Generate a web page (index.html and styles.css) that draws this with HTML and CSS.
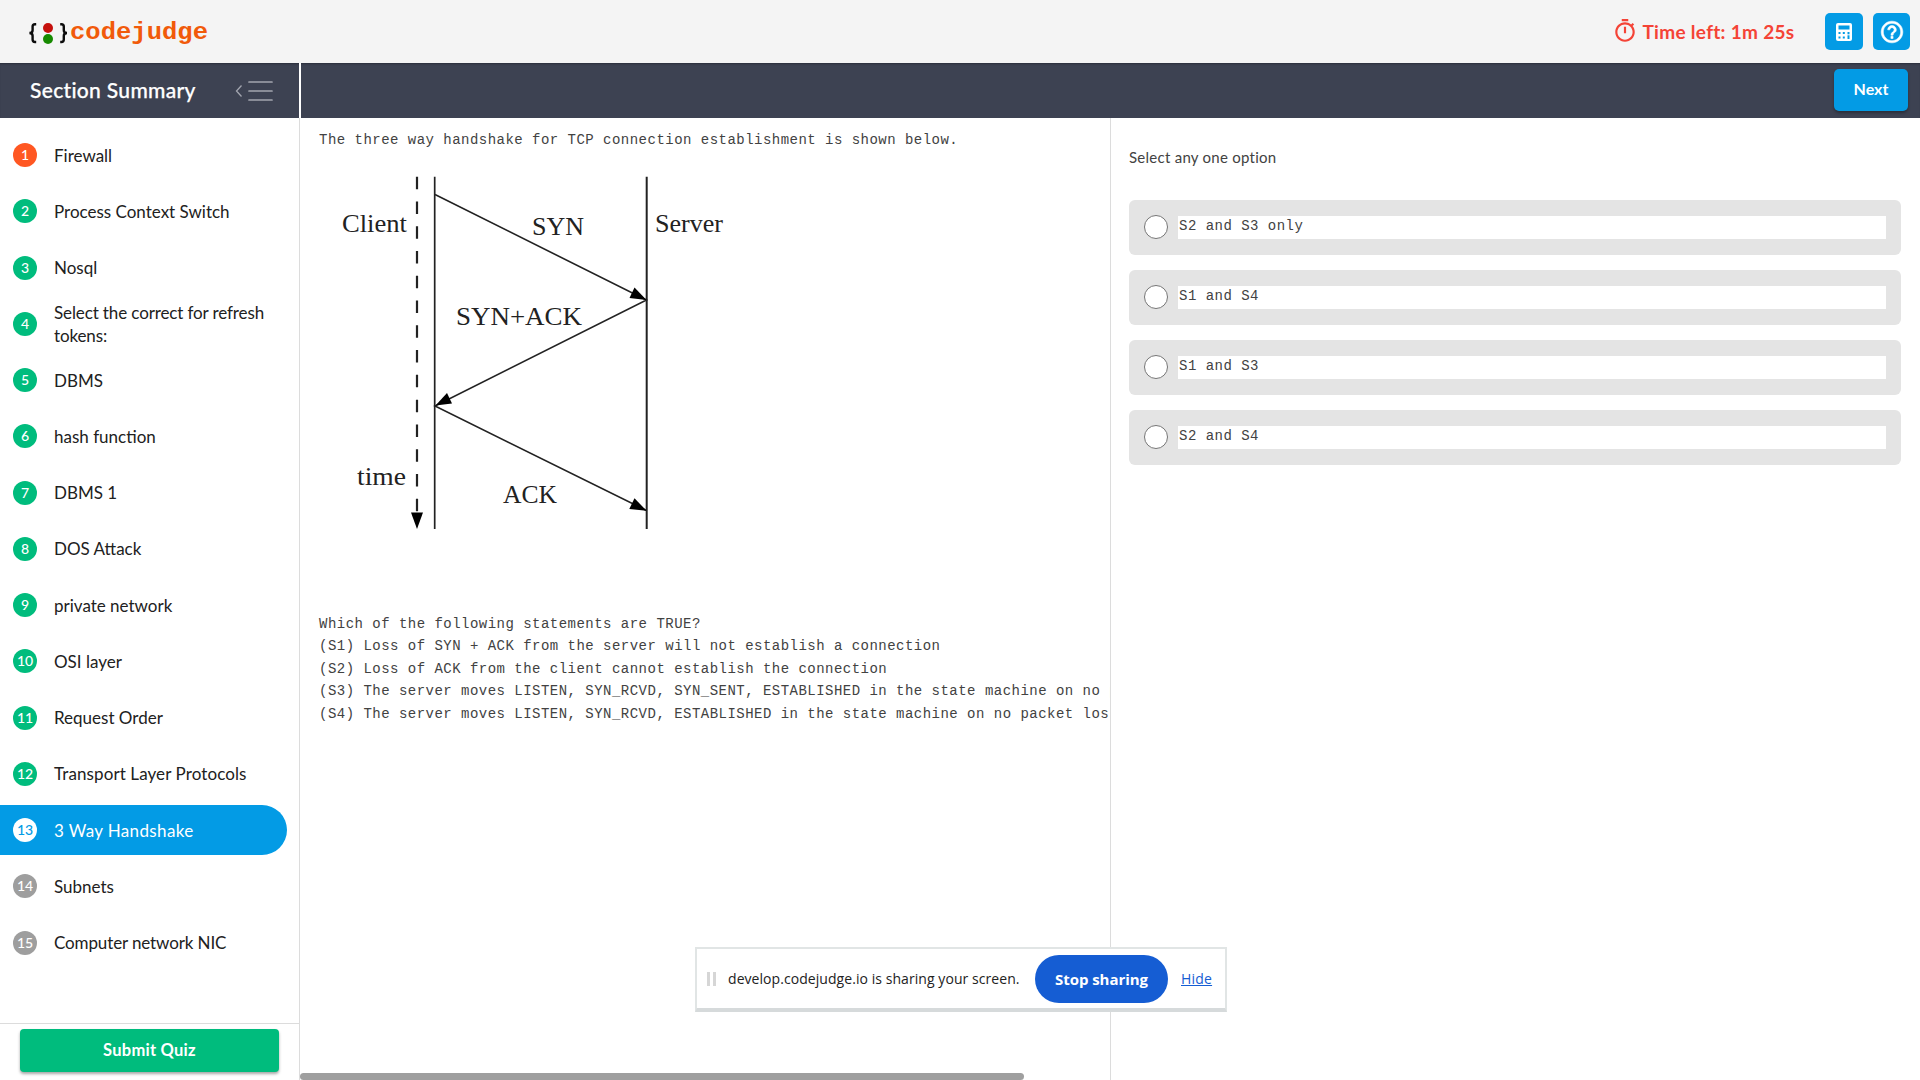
FILE: index.html
```html
<!DOCTYPE html>
<html lang="en">
<head>
<meta charset="utf-8">
<title>codejudge</title>
<link rel="stylesheet" href="styles.css">
</head>
<body>
<div class="app">
  <header class="topbar">
    <svg class="logo" width="182" height="30" viewBox="0 0 182 30" role="img" aria-label="codejudge">
      <g fill="none" stroke="#0c0c0c" stroke-width="2.4">
        <path d="M8.2 6.2H7Q4.6 6.2 4.6 8.6V12.2Q4.6 15 1.4 15Q4.6 15 4.6 17.800V21.600Q4.6 24 7 24H8.200"/>
        <path d="M32.200 6.200H33.400Q35.800 6.200 35.800 8.600V12.200Q35.800 15 39 15Q35.800 15 35.800 17.800V21.600Q35.800 24 33.400 24H32.200"/>
      </g>
      <circle cx="20" cy="10" r="5" fill="#c5100c"/>
      <circle cx="20" cy="21" r="5" fill="#178a00"/>
      <text x="42" y="21" class="logo-text" textLength="138" lengthAdjust="spacingAndGlyphs">codejudge</text>
    </svg>
    <div class="tools">
      <svg width="26" height="26" viewBox="0 0 24 24" fill="#f44336"><path d="M15 1H9v2h6V1zm-4 13h2V8h-2v6zm8.030-6.610l1.420-1.420c-.43-.51-.9-.99-1.410-1.410l-1.420 1.420C16.070 4.740 14.120 4 12 4c-4.970 0-9 4.030-9 9s4.020 9 9 9 9-4.030 9-9c0-2.120-.74-4.070-1.970-5.610zM12 20c-3.870 0-7-3.130-7-7s3.130-7 7-7 7 3.130 7 7-3.130 7-7 7z"/></svg>
      <span class="timer">Time left: 1m 25s</span>
      <button class="tool calc" aria-label="Calculator">
        <svg width="18" height="20" viewBox="0 0 18 20"><rect x="1" y="1" width="16" height="18" rx="2" fill="#fff"/><path fill="#039be5" d="M3.500 3.500h11v4h-11zM3.500 10h2v2h-2zM7.800 10h2v2h-2zM12.500 10h2v7h-2zM3.500 14.500h2v2h-2zM7.800 14.500h2v2h-2z"/><path fill="#fff" d="M12 12.300h3v1h-3z"/></svg>
      </button>
      <button class="tool" aria-label="Help">
        <svg width="26" height="26" viewBox="0 0 24 24" fill="#fff" stroke="#fff" stroke-width=".5"><path d="M11 18h2v-2h-2v2zm1-16C6.480 2 2 6.480 2 12s4.480 10 10 10 10-4.480 10-10S17.520 2 12 2zm0 18c-4.410 0-8-3.590-8-8s3.590-8 8-8 8 3.590 8 8-3.590 8-8 8zm0-14c-2.210 0-4 1.790-4 4h2c0-1.100.9-2 2-2s2 .9 2 2c0 2-3 1.750-3 5h2c0-2.250 3-2.500 3-5 0-2.210-1.790-4-4-4z"/></svg>
      </button>
    </div>
  </header>

  <nav class="navbar">
    <div class="nav-title">
      <h1>Section Summary</h1>
      <svg width="38" height="22" viewBox="0 0 38 22" fill="none" stroke="#a2a5af"><path d="M6.500 5.500L1.500 11L6.500 16.500" stroke-width="1.300"/><path d="M14 2H37M14 11H37M14 20H37" stroke-width="1.700" stroke-linecap="round"/></svg>
    </div>
    <button class="next">Next</button>
  </nav>

  <div class="body">
    <aside class="sidebar">
      <ol class="questions">
        <li class="wrong"><b>1</b><span>Firewall</span></li>
        <li><b>2</b><span>Process Context Switch</span></li>
        <li><b>3</b><span>Nosql</span></li>
        <li class="tight"><b>4</b><span>Select the correct for refresh tokens:</span></li>
        <li><b>5</b><span>DBMS</span></li>
        <li><b>6</b><span>hash function</span></li>
        <li><b>7</b><span>DBMS 1</span></li>
        <li><b>8</b><span>DOS Attack</span></li>
        <li><b>9</b><span>private network</span></li>
        <li><b>10</b><span>OSI layer</span></li>
        <li><b>11</b><span>Request Order</span></li>
        <li class="loose"><b>12</b><span>Transport Layer Protocols</span></li>
        <li class="active"><b>13</b><span>3 Way Handshake</span></li>
        <li class="todo"><b>14</b><span>Subnets</span></li>
        <li class="todo tight"><b>15</b><span>Computer network NIC</span></li>
      </ol>
      <div class="submit-row"><button class="submit">Submit Quiz</button></div>
    </aside>

    <main class="question">
      <div class="question-scroll">
        <pre class="intro">The three way handshake for TCP connection establishment is shown below.</pre>
        <svg class="diagram" width="440" height="380" viewBox="320 160 440 380">
          <g fill="none" stroke="#222">
            <path d="M417 176.700V512" stroke-width="2.200" stroke-dasharray="12.500 12.270"/>
            <path d="M434.700 176.700V529" stroke-width="1.700"/>
            <path d="M646.700 176.700V529" stroke-width="2"/>
            <path d="M435 194.500L646.500 300L435 406L646.500 510.500" stroke-width="1.600"/>
          </g>
          <g fill="#000">
            <path d="M411 512.500H423L417 529Z"/>
            <path d="M646.500 300L634.500 287.500L629.500 298Z"/>
            <path d="M435.500 405.500L447 393L452 403.500Z"/>
            <path d="M646.500 510.700L634.500 498.200L629.300 509Z"/>
          </g>
          <g class="labels">
            <text x="342" y="231.500" textLength="65" lengthAdjust="spacingAndGlyphs">Client</text>
            <text x="532" y="235" textLength="52" lengthAdjust="spacingAndGlyphs">SYN</text>
            <text x="655" y="231.500" textLength="68" lengthAdjust="spacingAndGlyphs">Server</text>
            <text x="456" y="325" textLength="126" lengthAdjust="spacingAndGlyphs">SYN+ACK</text>
            <text x="357" y="485" textLength="49" lengthAdjust="spacingAndGlyphs">time</text>
            <text x="503" y="502.500" textLength="54" lengthAdjust="spacingAndGlyphs">ACK</text>
          </g>
        </svg>
        <pre class="statements">Which of the following statements are TRUE?
(S1) Loss of SYN + ACK from the server will not establish a connection
(S2) Loss of ACK from the client cannot establish the connection
(S3) The server moves LISTEN, SYN_RCVD, SYN_SENT, ESTABLISHED in the state machine on no packet loss
(S4) The server moves LISTEN, SYN_RCVD, ESTABLISHED in the state machine on no packet loss</pre>
      </div>
      <div class="scroll-thumb"></div>
    </main>

    <section class="answers">
      <p>Select any one option</p>
      <label class="option"><i></i><code>S2 and S3 only</code></label>
      <label class="option"><i></i><code>S1 and S4</code></label>
      <label class="option"><i></i><code>S1 and S3</code></label>
      <label class="option"><i></i><code>S2 and S4</code></label>
    </section>
  </div>
</div>

<div class="share">
  <span class="grip"></span>
  <span class="share-text">develop.codejudge.io is sharing your screen.</span>
  <button class="stop">Stop sharing</button>
  <a class="hide">Hide</a>
</div>
</body>
</html>
```
FILE: styles.css
```css
* { box-sizing: border-box; }
body { margin: 0; background: #fff; color: #212121; font-family: Lato, sans-serif; overflow: hidden; }
button { border: 0; padding: 0 0 2px; font-family: inherit; color: #fff; display: flex; align-items: center; justify-content: center; }
p, h1, ol, pre { margin: 0; padding: 0; }

.app { height: 1080px; display: flex; flex-direction: column; }

.topbar { height: 63px; flex: none; background: #f4f4f4; display: flex; align-items: center; justify-content: space-between; padding: 0 10px 0 28px; }
.logo { margin-top: 2px; }
.logo-text { font: bold 23px "Liberation Mono", monospace; fill: #f15a0a; }
.tools { display: flex; align-items: center; }
.tools > svg { margin-bottom: 2px; }
.timer { margin: 0 31px 0 5px; padding-bottom: 1px; font-size: 19px; font-weight: 700; letter-spacing: .3px; color: #f44336; width: 151.500px; white-space: nowrap; }
.tool { width: 37px; height: 37px; padding: 0; border-radius: 5px; background: #039be5; }
.calc { width: 38px; margin-right: 10px; }

.navbar { height: 55px; flex: none; background: #3d4252; display: flex; justify-content: space-between; align-items: center; padding: 0 12px 2px 0; box-shadow: inset 0 2px 2px -1px #2b2f3c; }
.nav-title { width: 301px; height: 55px; margin-bottom: -2px; border-right: 2px solid #fff; padding: 0 26px 0 30px; display: flex; align-items: center; justify-content: space-between; color: #fff; }
.nav-title h1 { font-size: 21px; font-weight: 500; letter-spacing: .32px; padding-bottom: 3px; white-space: nowrap; -webkit-text-stroke: .25px #fff; }
.next { width: 74px; height: 42px; background: #039be5; border-radius: 5px; font-size: 16px; font-weight: 700; box-shadow: 0 2px 3px rgba(0, 0, 0, .3); }

.body { flex: 1; min-height: 0; display: flex; }
.sidebar { width: 300px; flex: none; border-right: 1px solid #dcdcdc; display: flex; flex-direction: column; justify-content: space-between; }
.questions { list-style: none; padding-top: 12px; display: flex; flex-direction: column; gap: 6.25px; }
.questions li { width: 287px; height: 50px; display: flex; align-items: center; padding: 0 20px 0 13px; font-size: 17px; line-height: 23px; border-radius: 0 25px 25px 0; }
.questions b { width: 24px; height: 24px; flex: none; margin-right: 17px; border-radius: 50%; background: #00bc7d; color: #fff; font-size: 14px; font-weight: 500; line-height: 24px; letter-spacing: 0; text-align: center; }
.questions .tight { letter-spacing: -.12px; }
.questions .loose { letter-spacing: .1px; }
.questions .wrong b { background: #ff5722; }
.questions .todo b { background: #9e9e9e; }
.questions .active { background: #039be5; color: #fff; letter-spacing: .36px; }
.questions .active b { background: #fff; color: #039be5; }
.submit-row { height: 57px; border-top: 1px solid #dcdcdc; padding: 5px 20px 0; }
.submit { width: 259px; height: 43px; border-radius: 4px; background: #00bc7d; font-size: 16.500px; font-weight: 700; letter-spacing: .25px; box-shadow: 0 2px 3px rgba(0, 0, 0, .35); }

.question { width: 810px; flex: none; display: flex; flex-direction: column; overflow: hidden; }
.question-scroll { flex: 1; padding: 11px 0 0 19px; overflow: hidden; }
pre, code { font: 14px/22.5px "Liberation Mono", monospace; letter-spacing: .477px; color: #424242; }
.diagram { display: block; margin: 8px 0 0 1px; }
.labels { font: 25px "Liberation Serif", serif; fill: #222; }
.statements { margin-top: 73px; }
.scroll-thumb { width: 724px; height: 7px; flex: none; border-radius: 4px; background: #9f9f9f; }

.answers { flex: 1; border-left: 1px solid #dcdcdc; padding: 28px 19px 0 18px; display: flex; flex-direction: column; gap: 15px; }
.answers p { font-size: 15px; line-height: 22px; letter-spacing: .26px; color: #424242; margin-bottom: 17px; }
.option { height: 55px; border-radius: 6px; background: #e4e4e4; display: flex; align-items: center; padding: 0 15px; }
.option i { width: 24px; height: 24px; border: 1px solid #757575; border-radius: 50%; background: #fff; margin: 0 10px 1px 0; }
.option code { flex: 1; height: 23px; background: #fff; line-height: 21px; padding-left: 1px; }

.share { position: absolute; left: 695px; top: 947px; width: 532px; height: 65px; background: #fff; border: 2px solid #e1e5e5; border-bottom: 4px solid #d6dadb; display: flex; align-items: center; font-family: "Open Sans", "Noto Sans", sans-serif; font-size: 14px; color: #222; padding-left: 10px; white-space: nowrap; }
.grip { width: 9px; height: 14px; border: solid #d6d6d6; border-width: 0 3px; margin-right: 12px; }
.share-text { width: 307px; letter-spacing: .06px; }
.stop { width: 133px; height: 48px; padding-bottom: 0; border-radius: 24px; background: #155dd3; font-size: 15px; font-weight: 700; letter-spacing: -.05px; }
.hide { color: #155dd3; text-decoration: underline; margin-left: 13px; letter-spacing: .2px; }
```
